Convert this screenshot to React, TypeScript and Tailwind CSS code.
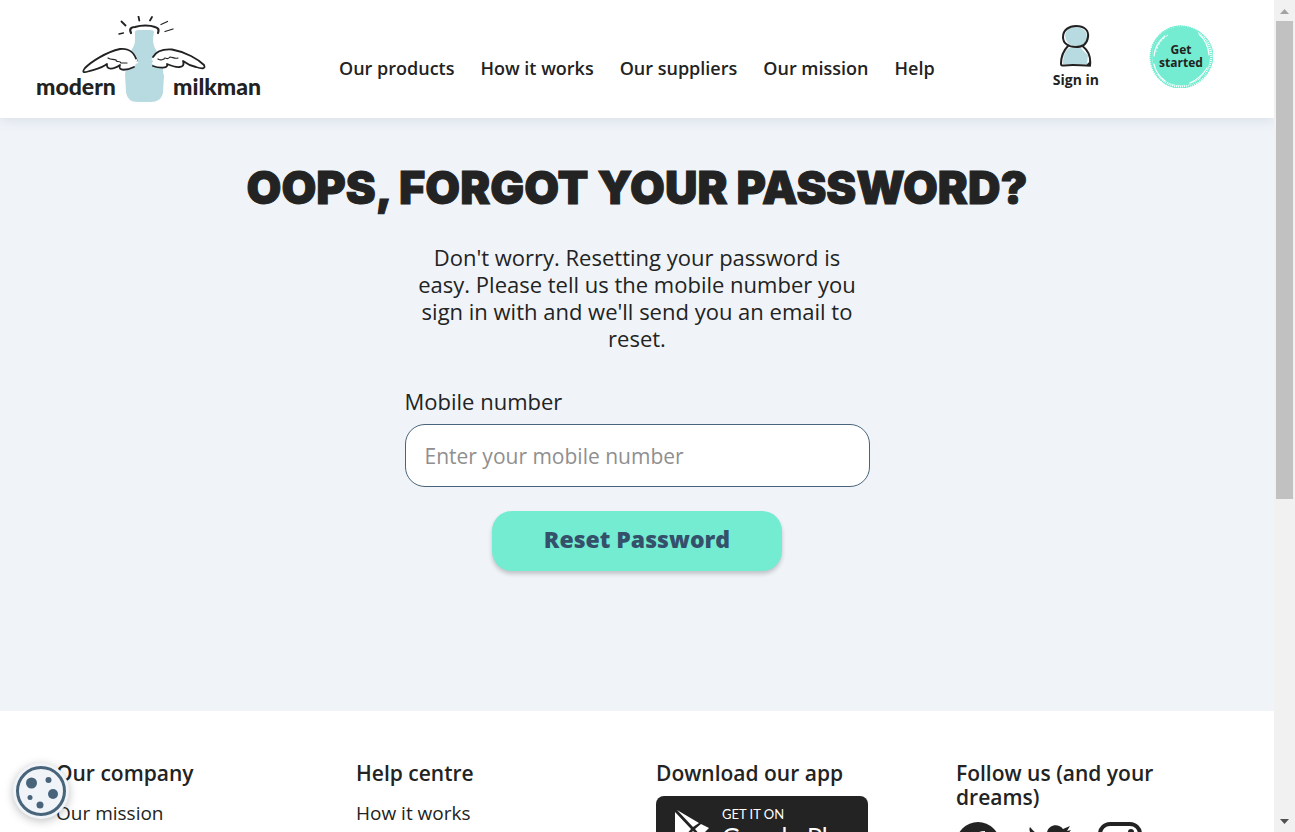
import React from "react";

const nav = ["Our products", "How it works", "Our suppliers", "Our mission", "Help"];

function Logo() {
  return (
    <svg viewBox="0 0 228 90" className="h-[90px] w-[228px]" role="img" aria-label="modern milkman">
      <path d="M99 16 Q99 14 103 14 H114 Q118 14 118 16 L117 22 C117 30 119 33 123 38 L127 46 V56 L128 60 L127 76 Q126 86 114 86 H102 Q91 86 90 76 L89 58 L94 36 C98 31 99 28 99 23Z" fill="#b7dbe1" />
      <path d="M95 17 C93 13 95 11 99 11 C105 9 114 9 119 11 C123 12 123 14 122 17" fill="none" stroke="#222" strokeWidth="2.2" strokeLinecap="round" />
      <path d="M83 18l4.500-1M129 15.500l8-2.500M125 8.500l6.500-3" fill="none" stroke="#222" strokeWidth="1.300" strokeLinecap="round" />
      <path d="M85.500 5.500l4 4M102.500 0.500l.8 4M116 1l-2 3.500" fill="none" stroke="#222" strokeWidth="1.800" strokeLinecap="round" />
      <g fill="#fff" stroke="#222" strokeWidth="1.800" strokeLinecap="round" strokeLinejoin="round">
        <path d="M101 46 C99 37 93 32 84 33 C70 36 55 46 49 52 C46 56 47 57 52 55.500 C60 53 66 52 71 48 C70 54 77 54 84 49 C81 56 92 54 98 51" />
        <path d="M117 41 C121 34 129 33 136 33.500 C150 36 162 43 168 49 C170 53 166 53 160 51 C155 50 151 48 147 45 C150 53 140 52 131 48 C133 53 122 52 117 50" />
      </g>
      <path d="M98 45 l3-1M96 48 l6-2M116 43 l4 2M116 47 l4 1" fill="none" stroke="#fff" strokeWidth="2" />
      <path d="M72 42c3 2 5 1 8 2 0 3 4 0 5 3 2 0 4 0 6 0M122 43c3 2 4 1 6 0 1-3 3 2 6-2 3 0 4 2 8 1" fill="none" stroke="#222" strokeWidth="1.200" strokeLinecap="round" />
      <text x="0" y="79" fontFamily="Lato, sans-serif" fontSize="23" fontWeight="900" fill="#222">modern</text>
      <text x="137" y="79" fontFamily="Lato, sans-serif" fontSize="23" fontWeight="900" fill="#222">milkman</text>
    </svg>
  );
}

function Person() {
  return (
    <svg viewBox="0 0 32 42" className="h-[42px] w-8" aria-hidden="true">
      <path d="M5 11 Q6 2 16 2 Q27 3 27 12 Q26 20 17 21 Q6 21 5 11ZM9 23H21Q24 27 28 30L27 39L3 39Q3 27 9 23Z" fill="#b7dbe1" />
      <g fill="none" stroke="#222" strokeWidth="2" strokeLinecap="round" strokeLinejoin="round">
        <path d="M3 12C3 5 9 1 16 1c8 0 13 4 12 11-1 7-6 10-12 10C8 22 3 18 3 12Z" />
        <path d="M8 21C3 26 1 33 1 39q0 2 3 1.500c8-1 17 0 26 0 1-8-2-15-7-19" />
      </g>
      <path d="M28 38 31 36 31 41.500 26 41Z" fill="#222" />
    </svg>
  );
}

function Cookie() {
  return (
    <svg viewBox="0 0 52 52" className="size-[52px]" aria-hidden="true">
      <circle cx="26" cy="26" r="23.500" fill="#f0f4f9" stroke="#48647a" strokeWidth="3" />
      <g fill="#48647a">
        <circle cx="16.500" cy="18" r="5.500" /><circle cx="33.500" cy="15" r="3" /><circle cx="38" cy="29" r="5" />
        <circle cx="15" cy="32.500" r="2.500" /><circle cx="25" cy="40" r="3.500" />
      </g>
    </svg>
  );
}

function Scrollbar() {
  return (
    <div className="flex w-[21px] shrink-0 flex-col items-center justify-between bg-[#f1f1f1]" aria-hidden="true">
      <svg viewBox="0 0 21 21" className="w-full"><path d="M6 14 10.500 9 15 14Z" fill="#a3a3a3" /></svg>
      <div className="w-[17px] grow-[478] basis-0 bg-[#c1c1c1]" />
      <div className="grow-[312] basis-0" />
      <svg viewBox="0 0 21 21" className="w-full"><path d="M6 8 10.500 13 15 8Z" fill="#505050" /></svg>
    </div>
  );
}

export default function App() {
  return (
    <div className="flex h-screen overflow-hidden bg-white font-['Open_Sans',sans-serif] text-[#222322]">
      <div className="min-w-0 flex-1 overflow-hidden">
        <header className="relative flex h-[118px] items-start bg-white pr-[61px] pl-9 shadow-[0_2px_12px_rgba(72,100,122,0.15)]">
          <a href="#home" className="mt-4 shrink-0"><Logo /></a>
          <nav className="mt-14 ml-[75px] flex flex-1 gap-[26px] text-lg leading-6 font-semibold whitespace-nowrap">
            {nav.map((n) => <a key={n} href="#nav">{n}</a>)}
          </nav>
          <a href="#signin" className="mt-[25px] mr-[50px] flex flex-col items-center text-sm leading-5 font-bold">
            <Person />
            <span className="mt-[3px]">Sign in</span>
          </a>
          <a href="#start" className="relative mt-6 grid size-16 place-items-center text-center text-xs leading-3 font-bold">
            <svg viewBox="0 0 64 64" className="absolute inset-0" aria-hidden="true">
              <circle cx="32" cy="32" r="29" fill="#73ecd1" />
              <g fill="none" stroke="#73ecd1">
                <circle cx="32" cy="33" r="30" strokeDasharray="1 1" strokeWidth="3" />
                <ellipse cx="31" cy="33" rx="29" ry="31" />
                <ellipse cx="33" cy="32" rx="31" ry="29" />
              </g>
              <path d="M16 12Q6 20 5 32M5 40Q7 50 16 57M50 10Q59 18 60 31M58 44Q52 54 41 59" fill="none" stroke="#fff" strokeWidth="1.200" strokeLinecap="round" />
              <path d="M19 11Q9 18 7 28" fill="none" stroke="#fff" strokeWidth="1" strokeDasharray="2 2" />
            </svg>
            <span className="relative leading-[13px]">Get started</span>
          </a>
        </header>

        <main className="flex min-h-[593px] flex-col items-center bg-[#f0f4f9] pt-10">
          <h1 className="font-['Inter',sans-serif] text-[45px] leading-[60px] font-black whitespace-nowrap [-webkit-text-stroke:1px_#222322]">OOPS, FORGOT YOUR PASSWORD?</h1>
          <p className="mt-[26px] w-[445px] text-center text-[22px] leading-[27px]">
            Don't worry. Resetting your password is easy. Please tell us the mobile number you sign in with and we'll send you an email to reset.
          </p>
          <form className="mt-[35px] flex w-[465px] flex-col" onSubmit={(e) => e.preventDefault()}>
            <label htmlFor="mobile" className="text-[22px] leading-7">Mobile number</label>
            <input id="mobile" type="tel" placeholder="Enter your mobile number" className="mt-[9px] h-[63px] rounded-[20px] border border-[#48647a] bg-white px-[19px] text-[21px] placeholder:text-[#8f8f8f]" />
            <button className="mt-6 h-[60px] w-[290px] self-center rounded-[20px] bg-[#73ecd1] pb-1 text-[23px] font-extrabold text-[#34506a] shadow-[0_3px_4px_rgba(0,0,0,0.2)]">Reset Password</button>
          </form>
        </main>

        <footer className="grid grid-cols-4 gap-x-[60px] bg-white pt-[50px] pr-[78px] pl-14 text-[19px] leading-6">
          <section>
            <h2 className="text-[21px] leading-6 font-semibold">Our company</h2>
            <a href="#mission" className="mt-4 block">Our mission</a>
          </section>
          <section>
            <h2 className="text-[21px] leading-6 font-semibold">Help centre</h2>
            <a href="#works" className="mt-4 block">How it works</a>
          </section>
          <section>
            <h2 className="text-[21px] leading-6 font-semibold">Download our app</h2>
            <a href="#play" className="mt-[11px] flex h-[63px] w-[212px] gap-3 rounded-lg bg-[#222322] pt-3 pl-[18px] font-['Lato',sans-serif] text-white">
              <svg viewBox="0 0 36 42" className="h-[42px] w-9" aria-hidden="true">
                <path d="M1 4V40L17 21ZM3 2 19 19 25 15ZM27 16 21 21 27 28 35 20ZM19 23 1 41 26 29Z" fill="#fff" />
              </svg>
              <span className="flex flex-col whitespace-nowrap">
                <span className="text-[13px] leading-3">GET IT ON</span>
                <span className="text-[25px] leading-8">Google Play</span>
              </span>
            </a>
          </section>
          <section>
            <h2 className="text-[21px] leading-6 font-semibold">Follow us (and your dreams)</h2>
            <div className="mt-[13px] flex gap-[27px]">
              <a href="#facebook" aria-label="Facebook">
                <svg viewBox="0 0 44 44" className="size-11"><circle cx="22" cy="22" r="22" fill="#222322" /><path d="M19 44V27H14V21H19V17Q19 9 29 9V15Q25 15 25 18V21H30L29 27H25V44Z" fill="#fff" /></svg>
              </a>
              <a href="#twitter" aria-label="Twitter">
                <svg viewBox="0 0 44 44" className="size-11"><path d="M3 5Q11 15 20 15C18 3 31 0 36 7L43 4 40 9 44 8 40 13C40 32 22 44 1 34Q9 34 13 31 6 29 5 23L9 23Q2 19 2 13L6 14Q1 9 3 5Z" fill="#222322" /></svg>
              </a>
              <a href="#instagram" aria-label="Instagram">
                <svg viewBox="0 0 44 44" className="size-11"><g fill="none" stroke="#222322" strokeWidth="4"><rect x="2" y="2" width="40" height="40" rx="10" /><circle cx="22" cy="22" r="9" /></g><circle cx="33" cy="10" r="3" fill="#222322" /></svg>
              </a>
            </div>
          </section>
        </footer>
      </div>
      <Scrollbar />
      <button aria-label="Cookie settings" className="fixed bottom-[13px] left-[13px] grid size-14 place-items-center rounded-full bg-[#f0f4f9] shadow-[0_2px_10px_rgba(0,0,0,0.25)]"><Cookie /></button>
    </div>
  );
}
